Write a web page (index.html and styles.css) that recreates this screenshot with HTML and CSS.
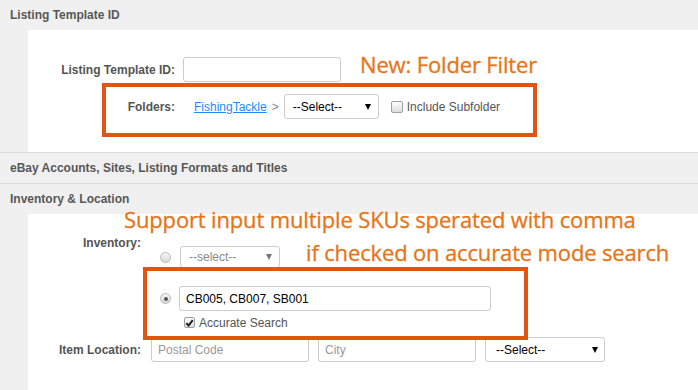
FILE: index.html
```html
<!DOCTYPE html>
<html lang="en">
<head>
    <meta charset="UTF-8">
    <title>Listing Template Search</title>
    <link rel="stylesheet" href="styles.css">
</head>
<body>
    <div class="section">
        <div class="section-title">Listing Template ID</div>
        <div class="panel panel-template">
            <div class="form-row">
                <label class="form-label">Listing Template ID:</label>
                <input type="text" class="text-input template-input">
            </div>
            <div class="form-row folders-row">
                <label class="form-label">Folders:</label>
                <div class="folder-path">
                    <a href="#" class="folder-link">FishingTackle</a>
                    <span class="sep">&gt;</span>
                    <div class="select select-folder">
                        <span>--Select--</span>
                        <svg class="arrow" width="6" height="6" viewBox="0 0 6 6"><path d="M0 0H6L3 6Z"/></svg>
                    </div>
                    <span class="checkbox"></span>
                    <span class="check-label">Include Subfolder</span>
                </div>
            </div>
            <!-- callout overlay -->
            <div class="callout-box callout-folders"></div>
            <div class="callout-text callout-new">New: Folder Filter</div>
        </div>
    </div>

    <div class="section">
        <div class="section-title">eBay Accounts, Sites, Listing Formats and Titles</div>
    </div>

    <div class="section">
        <div class="section-title">Inventory &amp; Location</div>
        <div class="panel panel-inventory">
            <div class="form-row inventory-row">
                <label class="form-label">Inventory:</label>
                <div class="inventory-options">
                    <div class="option">
                        <span class="radio"></span>
                        <div class="select select-inventory disabled">
                            <span>--select--</span>
                            <svg class="arrow" width="6" height="6" viewBox="0 0 6 6"><path d="M0 0H6L3 6Z"/></svg>
                        </div>
                    </div>
                    <div class="option option-sku">
                        <span class="radio checked"></span>
                        <input type="text" class="text-input sku-input" value="CB005, CB007, SB001">
                    </div>
                    <div class="accurate">
                        <span class="checkbox checked">
                            <svg width="10" height="10" viewBox="0 0 10 10"><path d="M1.5 5.2L4 7.8L8.6 1.8" fill="none" stroke="#1a1a1a" stroke-width="2.2"/></svg>
                        </span>
                        <span class="check-label">Accurate Search</span>
                    </div>
                </div>
            </div>
            <div class="form-row location-row">
                <label class="form-label">Item Location:</label>
                <input type="text" class="text-input location-input" placeholder="Postal Code">
                <input type="text" class="text-input location-input" placeholder="City">
                <div class="select select-location">
                    <span>--Select--</span>
                    <svg class="arrow" width="6" height="6" viewBox="0 0 6 6"><path d="M0 0H6L3 6Z"/></svg>
                </div>
            </div>
            <!-- callout overlay -->
            <div class="callout-box callout-sku"></div>
            <div class="callout-text callout-line1">Support input multiple SKUs sperated with comma</div>
            <div class="callout-text callout-line2">if checked on accurate mode search</div>
        </div>
    </div>
</body>
</html>
```

FILE: styles.css
```css
body {
    margin: 0;
    background-color: #f0f0f0;
    font-family: "Liberation Sans", Arial, sans-serif;
    font-size: 12px;
    color: #555;
}
.section-title {
    height: 30px;
    line-height: 30px;
    padding-left: 10px;
    font-weight: bold;
    color: #585858;
}
.section + .section .section-title {
    border-top: 1px solid #dadada;
}
.panel {
    margin-left: 28px;
    background-color: #fff;
    position: relative;
    box-sizing: border-box;
}
.panel-template {
    height: 122px;
    padding-top: 27px;
}
.panel-inventory {
    height: 176px;
    padding-top: 22px;
}
.form-row {
    display: flex;
    align-items: center;
    height: 25px;
}
.form-label {
    font-weight: bold;
    text-align: right;
    color: #555;
}
.panel-template .form-label {
    width: 147px;
    margin-right: 8px;
}
.panel-inventory .form-label {
    width: 113px;
    margin-right: 10px;
}
.text-input {
    box-sizing: border-box;
    height: 25px;
    border: 1px solid #ccc;
    border-radius: 3px;
    padding: 0 6px;
    font-family: "Liberation Sans", Arial, sans-serif;
    font-size: 12px;
    color: #000;
    outline: none;
}
.text-input::placeholder {
    color: #999;
}
.template-input {
    width: 158px;
}
.folders-row {
    margin-top: 12px;
}
.folder-path {
    display: flex;
    align-items: center;
    margin-left: 11px;
}
.folder-link {
    color: #1a8cff;
    text-decoration: underline;
}
.sep {
    color: #888;
    margin: 0 5px;
}
.select {
    box-sizing: border-box;
    display: flex;
    align-items: center;
    justify-content: space-between;
    height: 25px;
    border: 1px solid #ccc;
    border-radius: 3px;
    color: #000;
    background-color: #fff;
}
.select .arrow {
    fill: #000;
}
.select-folder {
    width: 95px;
    padding: 0 7px 0 8px;
}
.select-inventory {
    width: 100px;
    height: 22px;
    padding: 0 7px 0 8px;
}
.select.disabled {
    color: #888;
}
.select.disabled .arrow {
    fill: #777;
}
.select-location {
    width: 120px;
    margin-left: 9px;
    padding: 0 6px 0 10px;
}
.checkbox {
    box-sizing: border-box;
    display: inline-flex;
    align-items: center;
    justify-content: center;
    width: 12px;
    height: 12px;
    border: 1px solid #a0a0a0;
    border-radius: 2px;
    background: linear-gradient(#fdfdfd, #dedede);
}
.folder-path .checkbox {
    margin-left: 12px;
}
.check-label {
    margin-left: 4px;
    color: #555;
}
.radio {
    box-sizing: border-box;
    display: inline-block;
    position: relative;
    width: 11px;
    height: 11px;
    border: 1px solid #b8b8b8;
    border-radius: 50%;
    background: linear-gradient(#f6f6f6, #d8d8d8);
}
.radio.checked::after {
    content: "";
    position: absolute;
    left: 50%;
    top: 50%;
    width: 4px;
    height: 4px;
    border-radius: 50%;
    background-color: #555;
    transform: translate(-50%, -50%);
}
.inventory-row {
    align-items: flex-start;
    height: auto;
}
.inventory-row .form-label {
    line-height: 14px;
}
.inventory-options {
    margin-top: 10px;
}
.option {
    display: flex;
    align-items: center;
}
.option .radio {
    margin: 0 9px;
}
.option-sku {
    margin-top: 18px;
}
.option-sku .radio {
    margin-right: 8px;
}
.sku-input {
    width: 312px;
}
.accurate {
    display: flex;
    align-items: center;
    margin-top: 6px;
    margin-left: 33px;
    height: 11px;
}
.accurate .checkbox {
    width: 11px;
    height: 11px;
}
.location-row {
    margin-top: 9px;
}
.location-input {
    width: 158px;
}
.location-input + .location-input {
    margin-left: 9px;
}
.callout-box {
    position: absolute;
    box-sizing: border-box;
    border: 4px solid #df5513;
}
.callout-folders {
    left: 74px;
    top: 53px;
    width: 435px;
    height: 54px;
}
.callout-sku {
    left: 115px;
    top: 53px;
    width: 385px;
    height: 73px;
}
.callout-text {
    position: absolute;
    font-family: "Open Sans", sans-serif;
    font-size: 22px;
    line-height: 30px;
    letter-spacing: -0.15px;
    color: #e67518;
    white-space: nowrap;
    -webkit-text-stroke: 0.3px #e67518;
}
.callout-new {
    left: 332px;
    top: 19px;
}
.callout-line1 {
    left: 96px;
    top: -10px;
}
.callout-line2 {
    left: 278px;
    top: 23px;
}
```
